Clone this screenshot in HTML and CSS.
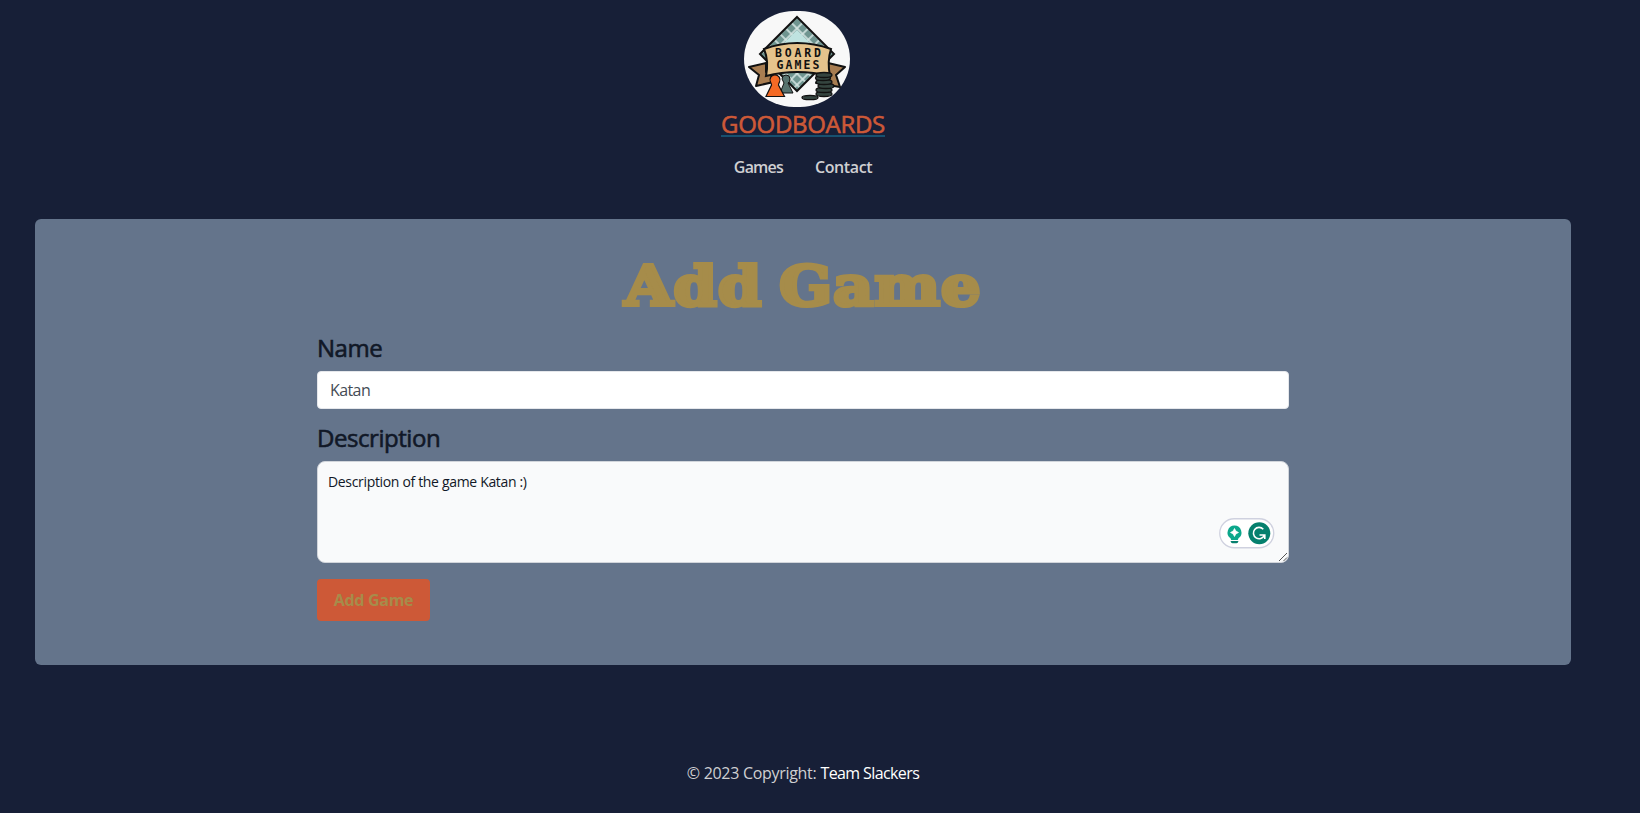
FILE: index.html
```html
<!DOCTYPE html>
<html lang="en">
<head>
<meta charset="utf-8">
<title>Goodboards</title>
<link rel="stylesheet" href="styles.css">
</head>
<body>
<header class="header">
  <a class="brand" href="#">
    <svg class="logo" width="106" height="96" viewBox="0 0 106 96">
      <defs>
        <pattern id="check" width="8" height="8" patternUnits="userSpaceOnUse" patternTransform="translate(53 6) rotate(45)">
          <rect width="8" height="8" fill="#d5e6e3"/>
          <rect x=".8" y=".8" width="6.400" height="6.400" fill="#6f9590"/>
        </pattern>
      </defs>
      <rect width="106" height="96" rx="50" ry="48" fill="#f8f8f8"/>
      <path d="M53 6 90 43 53 80 16 43Z" fill="url(#check)" stroke="#111" stroke-width="2"/>
      <path d="M53 19 69 35H37Z" fill="#bfe3e0"/>
      <path d="M22 52 5 56 15 64 12 75 34 70 22 61ZM84 52 101 56 92 64 96 76 72 72 84 61Z" fill="#a87d51" stroke="#111" stroke-width="2" stroke-linejoin="round"/>
      <path d="M20 38Q53 26 87 38Q83 50 86 65Q53 57 22 65Q25 50 20 38Z" fill="#e5c38c" stroke="#111" stroke-width="2"/>
      <g class="logo-text">
        <text x="31" y="46" textLength="46">BOARD</text>
        <text x="32.500" y="58" textLength="43">GAMES</text>
      </g>
      <path d="M38 68a4 4 0 1 1 8 0q0 3-2 4l5 10H36l4-10Z" fill="#56736f" stroke="#111"/>
      <path d="M26.500 71a5 5 0 1 1 9 0q-1 2-1 3l6 11.500H22L27.500 74q0-1-1-3Z" fill="#f46a25" stroke="#111" stroke-width="1.200"/>
      <g fill="#34443f" stroke="#111" stroke-width="1.300">
        <ellipse cx="80" cy="83" rx="8" ry="2.500"/><ellipse cx="80" cy="79" rx="8" ry="2.500"/>
        <ellipse cx="82" cy="75" rx="8" ry="2.500"/><ellipse cx="80" cy="71" rx="8" ry="2.500"/>
        <ellipse cx="79" cy="67" rx="7.500" ry="2.500"/><ellipse cx="80" cy="64" rx="8" ry="2.500"/>
        <ellipse cx="66" cy="86.500" rx="8" ry="2.200"/>
      </g>
    </svg>
    <span class="brand-name">GOODBOARDS</span>
  </a>
  <nav class="nav"><a class="nav-games" href="#">Games</a><a class="nav-contact" href="#">Contact</a></nav>
</header>
<main class="card">
  <h1 class="title">Add Game</h1>
  <form class="form">
    <label class="label label-name" for="name">Name</label>
    <input class="input" id="name" value="Katan">
    <label class="label label-desc" for="desc">Description</label>
    <div class="area">
      <textarea class="textarea" id="desc" spellcheck="false">Description of the game Katan :)</textarea>
      <svg class="assist" width="56" height="31" viewBox="0 0 56 31">
        <rect x=".75" y=".75" width="54" height="29" rx="14.500" fill="#fff" stroke="#cfd1df" stroke-width="1.300"/>
        <path d="M15.500 7.500a7 7 0 0 1 4 12.700l-.7 1.800h-6.600l-.7-1.800a7 7 0 0 1 4-12.700Z" fill="#0ba78b"/>
        <path d="M11.500 23h8q-.5 2.200-2 2.200h-4q-1.500 0-2-2.200Z" fill="#07806f"/>
        <path d="M15.500 10.500q.8 3.200 4 4-3.200.8-4 4-.8-3.200-4-4 3.200-.8 4-4Z" fill="#fff" stroke="#fff" stroke-width=".7"/>
        <circle cx="40.300" cy="15.300" r="11" fill="#05806e"/>
        <path d="M44.300 11.200a5.700 5.700 0 1 0 1 6.200M40.500 17h5.300v4" fill="none" stroke="#fff" stroke-width="1.600"/>
      </svg>
      <svg class="grip" width="10" height="10" viewBox="0 0 10 10"><path d="M1 9 9 1M5.500 9 9 5.500" stroke="#555" fill="none"/></svg>
    </div>
    <button class="button" type="button">Add Game</button>
  </form>
</main>
<footer class="footer"><span class="copy">© 2023 Copyright:</span><a class="team" href="#">Team Slackers</a></footer>
</body>
</html>
```
FILE: styles.css
```css
* { box-sizing: border-box; }
body {
  margin: 0;
  width: 1606px;
  height: 813px;
  overflow: hidden;
  font: 16px/24px "Open Sans", "Noto Sans", sans-serif;
  color: #111827;
}
html { background: #171f37; overflow: hidden; }
a { text-decoration: none; color: inherit; }
.header {
  height: 219px;
  padding-top: 11px;
  display: flex;
  flex-direction: column;
  align-items: center;
}
.brand { display: flex; flex-direction: column; align-items: center; }
.logo { display: block; margin-left: -12px; }
.logo-text { font: bold 11.5px "DejaVu Sans Mono", monospace; fill: #111; }
.brand-name {
  height: 30px;
  line-height: 33px;
  margin-bottom: 14px;
  font-size: 24px;
  letter-spacing: -0.3px;
  color: #cd5937;
  -webkit-text-stroke: 0.6px #cd5937;
  border-bottom: 2px solid #17506f;
}
.nav { display: flex; gap: 32px; height: 32px; line-height: 32px; font-weight: 600; color: #cfcfd2; }
.nav-games { letter-spacing: -0.8px; }
.nav-contact { letter-spacing: -0.4px; }
.card {
  width: 1536px;
  height: 446px;
  margin-left: 35px;
  padding-top: 34px;
  border-radius: 6px;
  background: #64748b;
}
.title {
  margin: 0;
  height: 77px;
  line-height: 66px;
  text-align: center;
  font-family: "DejaVu Serif", serif;
  font-size: 55px;
  font-weight: 700;
  letter-spacing: 1px;
  word-spacing: -5px;
  transform: scaleX(1.125);
  color: #a68c4a;
  -webkit-text-stroke: 4px #a68c4a;
}
.form { width: 972px; margin-left: 282px; display: flex; flex-direction: column; align-items: flex-start; }
.label {
  font-size: 24px;
  line-height: 36px;
  height: 41px;
  letter-spacing: -0.45px;
  -webkit-text-stroke: 0.6px #111827;
}
.input {
  width: 100%;
  height: 38px;
  margin-bottom: 11px;
  padding: 0 12px;
  border: 1px solid #e5e7eb;
  border-radius: 4px;
  background: #fff;
  color: #454b55;
  font: inherit;
  letter-spacing: -0.6px;
}
.area { position: relative; width: 100%; height: 102px; margin-bottom: 16px; }
.textarea {
  display: block;
  width: 100%;
  height: 102px;
  padding: 10px;
  border: 1px solid #d1d5db;
  border-radius: 8px;
  background: #f9fafb;
  color: #111827;
  font: 14px/20px "Open Sans", "Noto Sans", sans-serif;
  letter-spacing: -0.33px;
  resize: none;
}
.assist { position: absolute; right: 14px; bottom: 14px; }
.grip { position: absolute; right: 1px; bottom: 1px; }
.button {
  width: 113px;
  height: 42px;
  padding: 0;
  border: 0;
  border-radius: 4px;
  background: #cd5937;
  color: #a68c4a;
  font: 700 16px/42px "Open Sans", "Noto Sans", sans-serif;
  letter-spacing: -0.3px;
}
.footer { height: 148px; padding-top: 96px; display: flex; justify-content: center; gap: 4px; color: #cfcfd2; }
.copy { letter-spacing: -0.3px; }
.team { color: #fff; letter-spacing: -0.6px; }
```
